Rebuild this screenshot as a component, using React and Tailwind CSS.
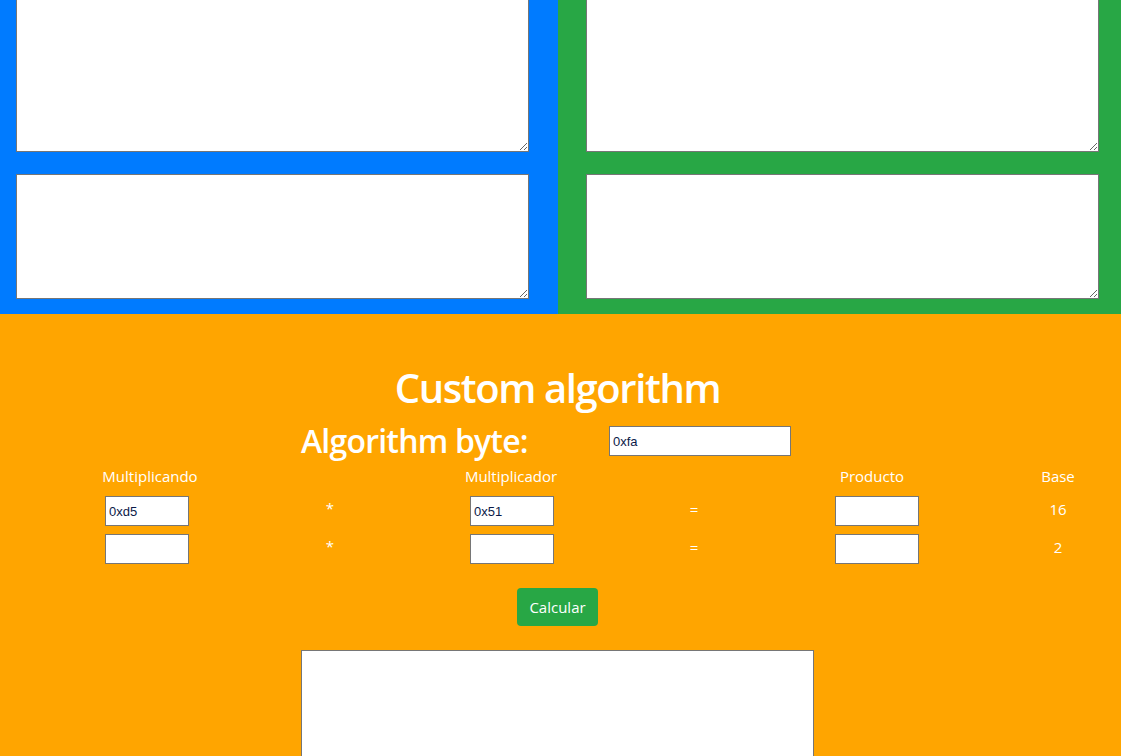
import React from 'react';

const font = { fontFamily: '"Open Sans", "Noto Sans", sans-serif' };

function Box({ value, className = '' }) {
  return (
    <input
      readOnly
      defaultValue={value}
      className={`h-[30px] border border-[#767676] bg-white px-[3px] text-[13px] text-[#0b1a48] outline-none ${className}`}
      style={{ fontFamily: '"Liberation Sans", Arial, sans-serif' }}
    />
  );
}

function Area({ className = '' }) {
  return (
    <textarea
      readOnly
      className={`block w-[513px] border border-[#767676] bg-white resize ${className}`}
    />
  );
}

export default function App() {
  const rows = [
    { a: '0xd5', b: '0x51', base: '16' },
    { a: '', b: '', base: '2' },
  ];

  return (
    <div className="w-[1121px] h-[756px] overflow-hidden bg-[#ffa500]" style={font}>
      {/* top panels */}
      <div className="flex h-[314px]">
        <div className="w-[558px] bg-[#007bff] pl-[16px]">
          <Area className="h-[152px] border-t-0" />
          <Area className="mt-[22px] h-[125px]" />
        </div>
        <div className="flex-1 bg-[#28a745] pl-[28px]">
          <Area className="h-[152px] border-t-0" />
          <Area className="mt-[22px] h-[125px]" />
        </div>
      </div>

      {/* custom algorithm */}
      <div className="text-white">
        <h1 className="mt-[50px] text-center text-[40px] font-semibold leading-[48px] tracking-[-1.4px] pr-[6px]">
          Custom algorithm
        </h1>
        <div className="mt-[10px] flex items-center pl-[301px] h-[38px]">
          <h2 className="w-[308px] text-[32px] font-semibold leading-[38px] tracking-[-0.8px]">Algorithm byte:</h2>
          <Box value="0xfa" className="w-[182px]" />
        </div>

        <div className="mt-[3px] ml-[60px] grid grid-cols-[180px_180px_182px_184px_172px_150px] text-[15px] text-center">
          <div className="h-[29px] leading-[26px]">Multiplicando</div>
          <div />
          <div className="h-[29px] leading-[26px]">Multiplicador</div>
          <div />
          <div className="h-[29px] leading-[26px]">Producto</div>
          <div className="pl-[50px] h-[29px] leading-[26px]">Base</div>
          {rows.map((r, i) => (
            <React.Fragment key={i}>
              <div className="h-[38px] flex items-center pl-[45px]">
                <Box value={r.a} className="w-[84px]" />
              </div>
              <div className="h-[38px] leading-[33px]">*</div>
              <div className="h-[38px] flex items-center pl-[50px]">
                <Box value={r.b} className="w-[84px]" />
              </div>
              <div className="h-[38px] leading-[35px]">=</div>
              <div className="h-[38px] flex items-center pl-[49px]">
                <Box value="" className="w-[84px]" />
              </div>
              <div className="pl-[50px] h-[38px] leading-[34px]">{r.base}</div>
            </React.Fragment>
          ))}
        </div>

        <div className="mt-[20px] flex justify-center pr-[6px]">
          <button className="h-[38px] w-[81px] rounded-[4px] bg-[#28a745] text-[15px] text-white">Calcular</button>
        </div>

        <div className="mt-[24px] flex justify-center pr-[6px]">
          <Area className="h-[160px]" />
        </div>
      </div>
    </div>
  );
}
